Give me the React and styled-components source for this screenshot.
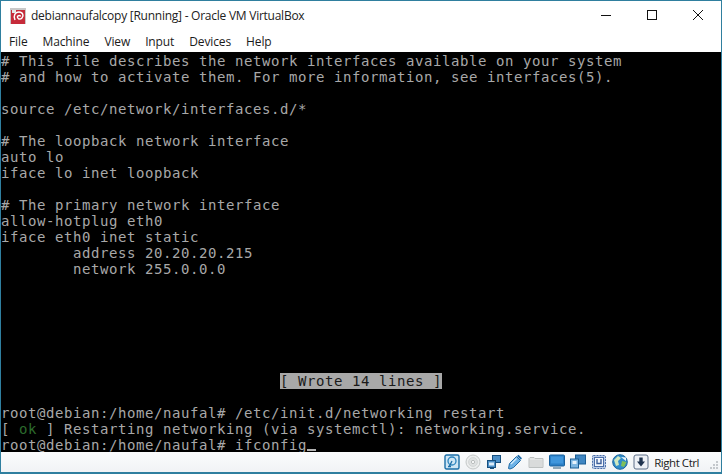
import React from "react"
import styled, { createGlobalStyle } from "styled-components"

const GlobalStyle = createGlobalStyle`
  html, body {
    margin: 0;
    padding: 0;
    background: #ffffff;
  }
`

const Window = styled.div`
  width: 722px;
  height: 474px;
  box-sizing: border-box;
  border: 1px solid #2f7f9f;
  border-bottom-width: 2px;
  display: flex;
  flex-direction: column;
  background: #ffffff;
  overflow: hidden;
  font-family: "Open Sans", "Noto Sans", sans-serif;
`

const TitleBar = styled.div`
  height: 29px;
  display: flex;
  align-items: center;
  color: #222222;
`

const AppIcon = styled.svg`
  width: 16px;
  height: 16px;
  margin-left: 9px;
  flex: none;
`

const Title = styled.span`
  margin-left: 5px;
  font-size: 12px;
  letter-spacing: -0.25px;
  white-space: nowrap;
  flex: 1;
`

const WinButton = styled.button`
  width: 46px;
  height: 29px;
  padding: 0;
  border: 0;
  background: none;
  display: flex;
  align-items: center;
  justify-content: center;
  margin-top: -1px;
`

const MenuBar = styled.div`
  height: 22px;
  display: flex;
  align-items: center;
  padding-left: 8px;
  gap: 15px;
  font-size: 12px;
  letter-spacing: -0.12px;
  color: #1a1a1a;
`

const MenuItem = styled.span``

const Screen = styled.pre`
  margin: 0;
  height: 400px;
  box-sizing: border-box;
  padding-top: 1px;
  flex: none;
  background: #000000;
  color: #a8a8a8;
  font-family: "DejaVu Sans Mono", "Liberation Mono", monospace;
  font-size: 14px;
  letter-spacing: 0.57px;
  line-height: 16px;
`

const Row = styled.div`
  height: 16px;
  white-space: pre;
`

const Notice = styled.span`
  background: #a8a8a8;
  color: #1a1a1a;
`

const Ok = styled.span`
  color: #2c6b2c;
`

const Cursor = styled.span`
  display: inline-block;
  width: 9px;
  height: 2px;
  background: #b4b4b4;
  vertical-align: -1px;
`

const StatusBar = styled.div`
  flex: 1;
  display: flex;
  align-items: center;
  justify-content: flex-end;
  background: linear-gradient(#fbfcfd, #f1f3f5);
  padding-right: 3px;
`

const Indicators = styled.div`
  display: flex;
  align-items: center;
  gap: 5px;
`

const Indicator = styled.svg`
  width: 16px;
  height: 16px;
  flex: none;
`

const HostKey = styled.span`
  margin-left: 5px;
  font-size: 11.5px;
  letter-spacing: -0.45px;
  color: #222222;
  white-space: nowrap;
`

const Grip = styled.svg`
  width: 8px;
  height: 8px;
  margin: 6px 0 0 11px;
  flex: none;
`

const lines = [
  "# This file describes the network interfaces available on your system",
  "# and how to activate them. For more information, see interfaces(5).",
  "",
  "source /etc/network/interfaces.d/*",
  "",
  "# The loopback network interface",
  "auto lo",
  "iface lo inet loopback",
  "",
  "# The primary network interface",
  "allow-hotplug eth0",
  "iface eth0 inet static",
  "        address 20.20.20.215",
  "        network 255.0.0.0",
  "",
  "",
  "",
  "",
  "",
  "",
]

function HardDisk() {
  return (
    <Indicator viewBox="0 0 16 16">
      <rect x="1" y="1" width="14" height="14" rx="1.5" fill="#cfe6f5" stroke="#1c6fa8" strokeWidth="1.4" />
      <circle cx="8" cy="7" r="4" fill="none" stroke="#2b83bd" strokeWidth="1.3" />
      <path d="M8 7 L5 13 M4 12.5 H7" stroke="#1c6fa8" strokeWidth="1.3" fill="none" />
    </Indicator>
  )
}

function Disc() {
  return (
    <Indicator viewBox="0 0 16 16">
      <circle cx="8" cy="8" r="7" fill="#eceeee" stroke="#c4c8c8" />
      <circle cx="8" cy="8" r="4.4" fill="#dfe2e2" stroke="#d2d6d6" />
      <circle cx="8" cy="8" r="1.6" fill="#ffffff" stroke="#b8bcbc" />
    </Indicator>
  )
}

function Network() {
  return (
    <Indicator viewBox="0 0 16 16">
      <rect x="6.5" y="1.5" width="8" height="7" fill="#4d90c8" stroke="#17507f" />
      <rect x="1.5" y="6.5" width="8" height="7" fill="#4d90c8" stroke="#17507f" />
      <rect x="3" y="8.5" width="5" height="3" fill="#dcecf8" />
      <path d="M4 13.5 V15 H8 V13.5" fill="#17507f" />
    </Indicator>
  )
}

function UsbPen() {
  return (
    <Indicator viewBox="0 0 16 16">
      <path d="M3 15 L1.5 14.5 L2.5 9.5 L9.5 2.5 L13.5 6.5 L6.5 13.5 Z" fill="#6db2e6" stroke="#1f6aa6" strokeWidth="1" />
      <path d="M10 2 L11.5 0.8 L15 4.2 L13.8 5.8 Z" fill="#1f6aa6" />
      <path d="M4 10 L9.5 4.5" stroke="#d6edfb" strokeWidth="1.3" />
    </Indicator>
  )
}

function Folder() {
  return (
    <Indicator viewBox="0 0 16 16">
      <path d="M1 13.5 V4.5 L2 3.5 H6 L7 4.5 H15 V13.5 Z" fill="#e3e5e5" stroke="#bcc0c0" />
      <rect x="2" y="6" width="12" height="7" fill="#d9dbdb" />
    </Indicator>
  )
}

function Display() {
  return (
    <Indicator viewBox="0 0 16 16">
      <rect x="0.5" y="1" width="15" height="11" rx="1" fill="#2b7fc6" stroke="#17609d" />
      <rect x="2" y="2.5" width="12" height="7" fill="#3f96dc" />
      <rect x="4" y="13" width="8" height="2" fill="#8fa7b8" />
    </Indicator>
  )
}

function Shared() {
  return (
    <Indicator viewBox="0 0 16 16">
      <rect x="5.5" y="1" width="10" height="9" fill="#3f86c2" stroke="#1c5f96" />
      <rect x="0.5" y="5" width="8" height="9" fill="#7db6e2" stroke="#1c5f96" />
      <rect x="2.5" y="7" width="4" height="3" fill="#e6f2fb" />
    </Indicator>
  )
}

function Chip() {
  return (
    <Indicator viewBox="0 0 16 16">
      <rect x="1.5" y="1.5" width="13" height="13" rx="1" fill="#b7c9e6" stroke="#4b6ea8" strokeDasharray="2 1" />
      <rect x="3.5" y="3.5" width="9" height="9" fill="#f2f6fc" stroke="#4b6ea8" />
      <path d="M6 5 V9.5 H10 V5" fill="none" stroke="#3d5f9a" strokeWidth="1.4" />
    </Indicator>
  )
}

function Globe() {
  return (
    <Indicator viewBox="0 0 16 16">
      <circle cx="8" cy="8" r="7.3" fill="#2f8bc9" stroke="#1b659c" />
      <path d="M2 6 L6 2 L9 4 L6 7 L7 11 L4 12 Z" fill="#cfe9c0" />
      <path d="M10 7 L14.5 8 L12 13 L9 12 Z" fill="#7fc05a" />
      <path d="M9 3 L14 3.5 L14 7 Z" fill="#eaf5fb" />
    </Indicator>
  )
}

function Capture() {
  return (
    <Indicator viewBox="0 0 16 16">
      <rect x="1" y="1" width="14" height="14" rx="2" fill="#eef1f6" stroke="#5d6f88" />
      <path d="M6.3 3.5 H9.7 V7.5 H12 L8 12.5 L4 7.5 H6.3 Z" fill="#20344f" />
    </Indicator>
  )
}

function App() {
  return (
    <>
      <GlobalStyle />
      <Window>
        <TitleBar>
          <AppIcon viewBox="0 0 16 16">
            <rect x="0" y="0" width="16" height="16" fill="#c9c9c9" />
            <rect x="1" y="2" width="14" height="14" fill="#c62b3a" />
            <path d="M5 12 C3 8 5 4 9 4 C13 4 14 8 12 10 C10 12 7 11 7.5 8.5 C8 7 10.5 7 10.5 8.5" fill="none" stroke="#ffffff" strokeWidth="1.5" />
            <path d="M2 2 H6 V5 H2 Z" fill="#e6e6e6" />
          </AppIcon>
          <Title>debiannaufalcopy [Running] - Oracle VM VirtualBox</Title>
          <WinButton aria-label="Minimize">
            <svg width="10" height="10" viewBox="0 0 10 10">
              <path d="M0 5.5 H10" stroke="#111111" strokeWidth="1" />
            </svg>
          </WinButton>
          <WinButton aria-label="Maximize">
            <svg width="10" height="10" viewBox="0 0 10 10">
              <rect x="0.5" y="0.5" width="9" height="9" fill="none" stroke="#111111" />
            </svg>
          </WinButton>
          <WinButton aria-label="Close">
            <svg width="10" height="10" viewBox="0 0 10 10">
              <path d="M0 0 L10 10 M10 0 L0 10" stroke="#111111" strokeWidth="1" />
            </svg>
          </WinButton>
        </TitleBar>
        <MenuBar>
          {["File", "Machine", "View", "Input", "Devices", "Help"].map((item) => (
            <MenuItem key={item}>{item}</MenuItem>
          ))}
        </MenuBar>
        <Screen>
          {lines.map((line, i) => (
            <Row key={i}>{line}</Row>
          ))}
          <Row>
            {"                               "}
            <Notice>[ Wrote 14 lines ]</Notice>
          </Row>
          <Row />
          <Row>root@debian:/home/naufal# /etc/init.d/networking restart</Row>
          <Row>
            [ <Ok>ok</Ok> ] Restarting networking (via systemctl): networking.service.
          </Row>
          <Row>
            root@debian:/home/naufal# ifconfig
            <Cursor />
          </Row>
        </Screen>
        <StatusBar>
          <Indicators>
            <HardDisk />
            <Disc />
            <Network />
            <UsbPen />
            <Folder />
            <Display />
            <Shared />
            <Chip />
            <Globe />
            <Capture />
          </Indicators>
          <HostKey>Right Ctrl</HostKey>
          <Grip viewBox="0 0 8 8">
            <path d="M6 0 h2 v2 h-2 z M3 3 h2 v2 h-2 z M6 3 h2 v2 h-2 z M0 6 h2 v2 h-2 z M3 6 h2 v2 h-2 z M6 6 h2 v2 h-2 z" fill="#c4c8cc" />
          </Grip>
        </StatusBar>
      </Window>
    </>
  )
}

export default App
